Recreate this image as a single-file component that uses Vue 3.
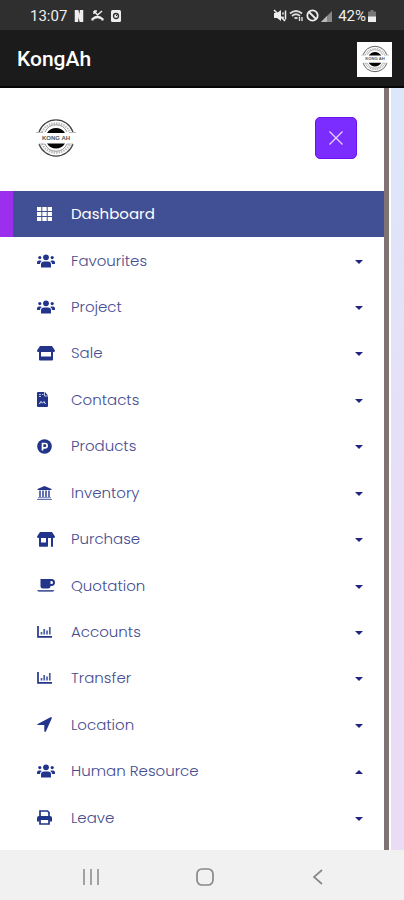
<script setup>
import { ref } from 'vue';

const menus = ref([
  { name: 'Dashboard', icon: 'grid', active: true },
  { name: 'Favourites', icon: 'users' },
  { name: 'Project', icon: 'users' },
  { name: 'Sale', icon: 'shop' },
  { name: 'Contacts', icon: 'file' },
  { name: 'Products', icon: 'product' },
  { name: 'Inventory', icon: 'bank' },
  { name: 'Purchase', icon: 'store' },
  { name: 'Quotation', icon: 'coffee' },
  { name: 'Accounts', icon: 'chart' },
  { name: 'Transfer', icon: 'chart' },
  { name: 'Location', icon: 'arrow' },
  { name: 'Human Resource', icon: 'users', open: true },
  { name: 'Leave', icon: 'print' },
]);

const toggle = (menu) => {
  if (!menu.active) {
    menu.open = !menu.open;
  }
};
</script>

<template>
  <div class="screen">
    <svg class="defs" width="0" height="0" aria-hidden="true">
      <symbol id="logo" viewBox="0 0 40 40">
        <g fill="none" stroke="#444">
          <path d="M3 14a18 18 0 0 1 34 0M3 26a18 18 0 0 0 34 0" stroke-width="1.2" />
          <path d="M6 14a15.500 15.500 0 0 1 28 0M6 26a15.500 15.500 0 0 0 28 0" stroke-width="2" stroke="#bbb" stroke-dasharray="1.500 1" />
          <path d="M9 14a12 12 0 0 1 22 0M9 26a12 12 0 0 0 22 0" stroke-width="0.8" stroke="#777" />
          <path d="M0 14.500h7M33 14.500h7M3 26h6M31 26h6" stroke-width="0.7" stroke="#999" />
        </g>
        <path d="M11 15a10.500 10.500 0 0 1 18 0zM11 25.500a10.500 10.500 0 0 0 18 0z" fill="#050505" />
      </symbol>
    </svg>

    <div class="status-bar">
      <div class="status-group">
        <span>13:07</span>
        <svg width="10" height="12" viewBox="0 0 10 12"><path d="M1 0h3l2 5V0h3v12H6L4 6.500V12H1z" fill="#eee" stroke="#eee" stroke-width="0.5" /></svg>
        <svg width="13" height="12" viewBox="0 0 13 12" fill="none" stroke="#eee"><path d="M3 1l3.500 4L11 1M3 1v3M3 1h3" stroke-width="1.500" /><path d="M1.500 10.500v-1.500q5-4 10 0v1.500" stroke-width="2.200" /></svg>
        <svg width="10" height="12" viewBox="0 0 10 12"><rect width="10" height="12" rx="1.500" fill="#eee" /><circle cx="5" cy="6" r="2.500" fill="none" stroke="#2f2f2f" stroke-width="1.300" /><path d="M5 6l2-2" stroke="#2f2f2f" /></svg>
      </div>
      <div class="status-group right">
        <svg width="14" height="13" viewBox="0 0 14 13"><path d="M1 4h3l4-3v11L4 9H1z" fill="#eee" /><path d="M1 1l11 11M10 3.500v2M10 7.500v2M12.500 1.500v9" stroke="#eee" stroke-width="1.500" /></svg>
        <svg width="15" height="13" viewBox="0 0 15 13" fill="none" stroke="#ddd" stroke-width="1.800"><path d="M1 4.500q6-5 12 0M3 7q4-3.500 8 0M5.500 9.500q1.500-1.300 3 0" /><path d="M10.500 8v4M13 8v4" stroke-width="1.400" /></svg>
        <svg width="13" height="13" viewBox="0 0 13 13" fill="none" stroke="#eee" stroke-width="1.800"><circle cx="6.500" cy="6.500" r="5.200" /><path d="M3 3l7 7" /></svg>
        <svg width="11" height="12" viewBox="0 0 11 12"><path d="M0 12L11 1v11z" fill="#888" /><path d="M0 12l6-6v6z" fill="#bbb" /></svg>
        <span class="battery-text">42%</span>
        <svg width="8" height="12" viewBox="0 0 8 12"><path d="M2.500 0h3v1.500H8V12H0V1.500h2.500z" fill="#777" /><path d="M0 6.500h8V12H0z" fill="#eee" /></svg>
      </div>
    </div>

    <header class="app-bar">
      <h1>KongAh</h1>
      <div class="avatar">
        <svg class="logo" width="28" height="28" viewBox="0 0 40 40">
          <use href="#logo" />
          <text x="20" y="22" text-anchor="middle">KONG AH</text>
        </svg>
      </div>
    </header>

    <main class="content">
      <aside class="sidebar">
        <div class="sidebar-head">
          <svg class="logo" width="40" height="40" viewBox="0 0 40 40">
            <use href="#logo" />
            <text x="20" y="22" text-anchor="middle">KONG AH</text>
          </svg>
          <button class="close-btn" type="button" aria-label="Close menu">
            <svg width="16" height="16" viewBox="0 0 16 16"><path d="M1.500 1.500l13 13M14.500 1.500l-13 13" stroke="#e6d5ff" stroke-width="1.300" /></svg>
          </button>
        </div>

        <nav class="menu">
          <a
            v-for="menu in menus"
            :key="menu.name"
            href="#"
            class="menu-item"
            :class="{ active: menu.active }"
            @click.prevent="toggle(menu)"
          >
            <span class="menu-icon">
              <svg v-if="menu.icon === 'grid'" width="15" height="14" viewBox="0 0 15 14" fill="currentColor">
                <path d="M0 0h4.300v4H0zM5.300 0h4.400v4H5.300zM10.700 0H15v4h-4.300zM0 5h4.300v4H0zM5.300 5h4.400v4H5.300zM10.700 5H15v4h-4.300zM0 10h4.300v4H0zM5.300 10h4.400v4H5.300zM10.700 10H15v4h-4.300z" />
              </svg>
              <svg v-else-if="menu.icon === 'users'" width="18" height="14" viewBox="0 0 18 14" fill="currentColor">
                <circle cx="9" cy="3.300" r="2.900" /><circle cx="2.800" cy="3.600" r="1.600" /><circle cx="15.200" cy="3.600" r="1.600" />
                <path d="M4 13v-2.500q0-3 3-3h4q3 0 3 3V13q0 .6-.6.6H4.600Q4 13.600 4 13zM0 9.500v-1q0-2 2-2h1.500q.8 0 1.300.4Q3 8 3 10H.5Q0 10 0 9.500zM18 9.500v-1q0-2-2-2h-1.500q-.8 0-1.300.4Q15 8 15 10h2.500q.5 0 .5-.5z" />
              </svg>
              <svg v-else-if="menu.icon === 'shop'" width="18" height="15" viewBox="0 0 18 15" fill="currentColor">
                <path d="M3 0h12l3 4.500q0 1.500-1.500 1.500h-15Q0 6 0 4.500zM2 6h2v4.500h10V6h2v7.500q0 1-1 1H3q-1 0-1-1z" />
              </svg>
              <svg v-else-if="menu.icon === 'file'" width="12" height="15" viewBox="0 0 12 15">
                <path d="M1 0h7l3 3.500V14q0 1-1 1H1q-1 0-1-1V1q0-1 1-1z" fill="currentColor" />
                <path d="M2 2.500h2M5 2.500h1.500M2 4.500h2M7.500 0v4H11" stroke="#fff" stroke-width="0.700" fill="none" />
                <path d="M2.500 12l1.300-2.500L5.500 11 7 9.500 8.500 12" stroke="#fff" stroke-width="0.900" fill="none" />
              </svg>
              <svg v-else-if="menu.icon === 'product'" width="15" height="15" viewBox="0 0 15 15">
                <circle cx="7.500" cy="7.500" r="7.300" fill="currentColor" />
                <path d="M5.500 11.500V4.500H8a2.100 2.100 0 0 1 0 4.300H5.500" stroke="#fff" stroke-width="1.700" fill="none" />
              </svg>
              <svg v-else-if="menu.icon === 'bank'" width="15" height="14" viewBox="0 0 15 14" fill="currentColor">
                <path d="M7.500 0L14.500 3v1H.5V3z" />
                <path d="M2 4.500h2V11H2zM5 4.500h2V11H5zM8 4.500h2V11H8zM11 4.500h2V11h-2zM1 11.300h13v1H1zM0 13h15v1H0z" opacity="0.700" />
              </svg>
              <svg v-else-if="menu.icon === 'store'" width="18" height="15" viewBox="0 0 18 15" fill="currentColor">
                <path d="M3 0h12l3 4.500q0 1.500-1.500 1.500h-15Q0 6 0 4.500zM2 6h2v4.500h5V6h2v8q0 .7-.7.700H2.700Q2 14.700 2 14zM14 6h2v8.700h-2z" />
              </svg>
              <svg v-else-if="menu.icon === 'coffee'" width="18" height="13" viewBox="0 0 18 13" fill="currentColor">
                <path fill-rule="evenodd" d="M3.500 0H14.500a3.400 3.400 0 0 1 0 7H13.500Q13.500 9.500 11 9.500H6Q3.500 9.500 3.500 7zM13.500 2v3h1a1.500 1.500 0 0 0 0-3z" />
                <path d="M0 11h17.500q-.5 1.700-2 1.700H2Q.5 12.700 0 11z" opacity="0.800" />
              </svg>
              <svg v-else-if="menu.icon === 'chart'" width="15" height="12" viewBox="0 0 15 12" fill="none" stroke="currentColor">
                <path d="M1 0v10.800h14" stroke-width="1.700" />
                <path d="M4.500 8.500V6M7.200 8.500V3M10 8.500V4.500M12.800 8.500V1" stroke-width="1.700" opacity="0.800" />
              </svg>
              <svg v-else-if="menu.icon === 'arrow'" width="15" height="15" viewBox="0 0 15 15" fill="currentColor">
                <path d="M.7 7L13.500.2q1.500-.4 1.200 1.200L9 14.200q-.9 1.400-1.700 0V8H1Q-.6 7.700.7 7z" />
              </svg>
              <svg v-else width="15" height="15" viewBox="0 0 15 15" fill="none" stroke="currentColor">
                <path d="M3 6.500V1h7.500L12 2.500v4" stroke-width="1.700" />
                <path d="M2 6h11q2 0 2 2v3.500h-2.500V10h-10v1.500H0V8q0-2 2-2z" fill="currentColor" stroke="none" />
                <path d="M3 10v4h9v-4" stroke-width="1.700" />
              </svg>
            </span>
            <span class="menu-name">{{ menu.name }}</span>
            <span v-if="!menu.active" class="caret" :class="{ up: menu.open }"></span>
          </a>
        </nav>
      </aside>
      <div class="backdrop"></div>
    </main>

    <div class="nav-bar">
      <button type="button" aria-label="Recent apps">
        <svg width="18" height="18" viewBox="0 0 18 18"><path d="M2 1v16M9 1v16M16 1v16" stroke="#999" stroke-width="1.800" /></svg>
      </button>
      <button type="button" aria-label="Home">
        <svg width="18" height="18" viewBox="0 0 18 18"><rect x="1" y="1" width="16" height="16" rx="5" fill="none" stroke="#888" stroke-width="1.700" /></svg>
      </button>
      <button type="button" aria-label="Back">
        <svg width="18" height="18" viewBox="0 0 18 18"><path d="M13 2L5 9l8 7" fill="none" stroke="#888" stroke-width="1.700" /></svg>
      </button>
    </div>
  </div>
</template>

<style>
body {
  margin: 0;
}
</style>

<style scoped>
.screen {
  display: flex;
  flex-direction: column;
  min-height: 100vh;
  background: #fff;
  font-family: Poppins, Inter, sans-serif;
}
.defs {
  position: absolute;
}
svg {
  display: block;
  flex-shrink: 0;
}
.logo text {
  fill: #555;
  font-family: 'Liberation Sans', sans-serif;
  font-size: 6px;
  font-weight: 700;
}
.status-bar {
  display: flex;
  justify-content: space-between;
  align-items: center;
  box-sizing: border-box;
  height: 30px;
  padding: 1px 28px 0 30px;
  background: #2f2f2f;
  color: #eee;
  font-family: Roboto, sans-serif;
  font-size: 15px;
}
.status-group {
  display: flex;
  align-items: center;
  gap: 7px;
}
.status-group.right {
  gap: 2px;
}
.battery-text {
  padding-left: 4px;
}
.app-bar {
  display: flex;
  justify-content: space-between;
  align-items: center;
  box-sizing: border-box;
  height: 58px;
  padding: 2px 12px 0 17px;
  background: #1b1b1b;
  border-bottom: 2px solid #050505;
}
.app-bar h1 {
  margin: 0;
  color: #fff;
  font-family: Roboto, sans-serif;
  font-size: 21px;
  font-weight: 500;
  line-height: 24px;
}
.avatar {
  display: flex;
  justify-content: center;
  align-items: center;
  width: 35px;
  height: 35px;
  background: #fff;
}
.content {
  display: flex;
  flex: 1;
}
.sidebar {
  display: flex;
  flex: 1;
  flex-direction: column;
  background: #fff;
  border-right: 5px solid #7f7373;
}
.sidebar-head {
  display: flex;
  justify-content: space-between;
  align-items: center;
  height: 99px;
  padding: 0 27px 4px 36px;
}
.close-btn {
  display: flex;
  justify-content: center;
  align-items: center;
  width: 42px;
  height: 42px;
  padding: 0;
  background: #7b2cff;
  border: 1px solid #6a12f0;
  border-radius: 5px;
  cursor: pointer;
}
.menu {
  display: flex;
  flex: 1;
  flex-direction: column;
  padding-bottom: 9px;
}
.menu-item {
  display: flex;
  flex: 1;
  align-items: center;
  box-sizing: border-box;
  min-height: 46px;
  padding: 0 21px 0 37px;
  color: #22358a;
  text-decoration: none;
}
.menu-item.active {
  padding-left: 24px;
  background: #415095;
  border-left: 13px solid #9c2fee;
  color: #fff;
}
.menu-icon {
  width: 34px;
}
.menu-name {
  flex: 1;
  color: #454c90;
  font-size: 15px;
  font-weight: 300;
  line-height: 24px;
}
.active .menu-name {
  color: #fff;
  font-weight: 400;
}
.caret {
  margin-top: 2px;
  border: 4px solid transparent;
  border-top-color: #22257f;
  border-bottom: 0;
}
.caret.up {
  border-top: 0;
  border-bottom: 4px solid #22257f;
}
.backdrop {
  width: 13px;
  border-left: 2px solid #fff;
  background: linear-gradient(#dce7fa, #e9dcf6 65%, #eadcf5);
}
.nav-bar {
  display: flex;
  justify-content: space-between;
  align-items: center;
  box-sizing: border-box;
  height: 50px;
  padding: 3px 77px 0 82px;
  background: #f1f1f1;
}
.nav-bar button {
  padding: 0;
  border: 0;
  background: none;
}
</style>
